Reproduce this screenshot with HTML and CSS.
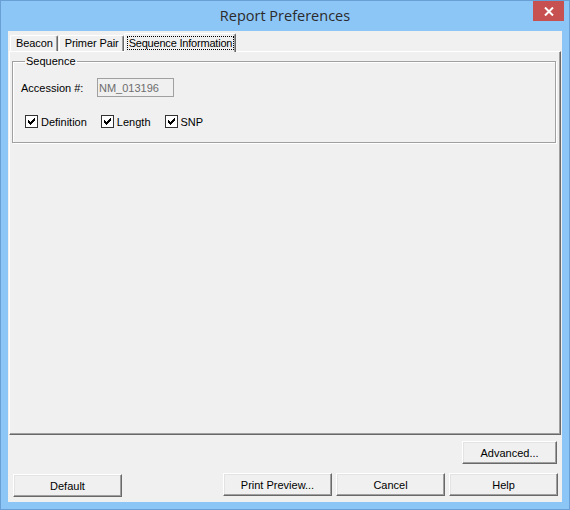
FILE: index.html
```html
<!DOCTYPE html>
<html lang="en">
<head>
    <meta charset="UTF-8" />
    <title>Report Preferences</title>
    <link rel="stylesheet" href="styles.css">
</head>
<body>
<div class="window">
    <div class="titlebar">
        <span></span>
        <span class="title">Report Preferences</span>
        <span class="close">
            <svg width="10" height="9" viewBox="0 0 10 9"><path d="M1 0.5 L9 8.5 M9 0.5 L1 8.5" stroke="#fff" stroke-width="2"/></svg>
        </span>
    </div>

    <div class="client">
        <div class="tabs">
            <div class="tab">Beacon</div>
            <div class="tab">Primer Pair</div>
            <div class="tab active"><span class="focus">Sequence Information</span></div>
        </div>

        <div class="panel">
            <fieldset class="group">
                <legend>Sequence</legend>
                <div class="field">
                    <label for="accession">Accession #:</label>
                    <input type="text" id="accession" value="NM_013196" disabled>
                </div>
                <div class="checks">
                    <label class="check"><span class="box"><svg width="7" height="7" viewBox="0 0 7 7"><path d="M0 2h1v1h1v1h1v-1h1v-1h1v-1h1v-1h1v3h-1v1h-1v1h-1v1h-1v1h-1v-1h-1v-1h-1z" fill="#000"/></svg></span>Definition</label>
                    <label class="check"><span class="box"><svg width="7" height="7" viewBox="0 0 7 7"><path d="M0 2h1v1h1v1h1v-1h1v-1h1v-1h1v-1h1v3h-1v1h-1v1h-1v1h-1v1h-1v-1h-1v-1h-1z" fill="#000"/></svg></span>Length</label>
                    <label class="check"><span class="box"><svg width="7" height="7" viewBox="0 0 7 7"><path d="M0 2h1v1h1v1h1v-1h1v-1h1v-1h1v-1h1v3h-1v1h-1v1h-1v1h-1v1h-1v-1h-1v-1h-1z" fill="#000"/></svg></span>SNP</label>
                </div>
            </fieldset>
        </div>

        <div class="footer">
            <div class="row-adv">
                <button class="btn">Advanced...</button>
            </div>
            <div class="row-main">
                <button class="btn btn-default">Default</button>
                <div class="spacer"></div>
                <button class="btn">Print Preview...</button>
                <button class="btn">Cancel</button>
                <button class="btn">Help</button>
            </div>
        </div>
    </div>
</div>
</body>
</html>
```

FILE: styles.css
```css
body { margin: 0; font-family: "Liberation Sans", Arial, sans-serif; font-size: 11px; color: #000; }
.window { width: 570px; height: 510px; box-sizing: border-box; background: #8cc6f7; border: 1px solid #6a9fd6; display: flex; flex-direction: column; }

.titlebar { height: 30px; display: grid; grid-template-columns: 1fr auto 1fr; align-items: start; }
.title { font-family: "Open Sans", "Noto Sans", sans-serif; font-size: 14.5px; color: #2b2b2b; margin-top: 5px; }
.close { justify-self: end; margin-right: 5px; width: 31px; height: 20px; background: #c75050; display: flex; align-items: center; justify-content: center; }
.close svg { display: block; }

.client { flex: 1; margin: 0 7px 7px 7px; background: #f0f0f0; display: flex; flex-direction: column; }

.tabs { display: flex; align-items: flex-end; height: 20px; padding-left: 2px; position: relative; z-index: 1; }
.tab { height: 16px; line-height: 15px; padding: 0 4px 0 5px; letter-spacing: -0.1px; border-top: 1px solid #fff; border-left: 1px solid #fff; border-right: 1px solid #696969; box-shadow: inset -1px 0 0 #a0a0a0; border-radius: 2px 2px 0 0; box-sizing: border-box; }
.tab + .tab { margin-left: 1px; }
.tab.active { height: 19px; margin: 0 0 -1px 0; padding: 2px 1px 0 2px; background: #f0f0f0; letter-spacing: -0.2px; }
.focus { display: block; border: 1px dotted #000; padding: 0 1px; line-height: 12px; height: 12px; }

.panel { height: 384px; flex: none; box-sizing: border-box; margin: 0 1px; border-top: 1px solid #fff; border-left: 1px solid #fff; border-right: 1px solid #696969; border-bottom: 1px solid #696969; box-shadow: inset -1px -1px 0 #a0a0a0; padding: 3px 0 0 2px; }

.group { width: 544px; height: 88px; box-sizing: border-box; margin: 0; padding: 10px 0 0 8px; border: 1px solid #a0a0a0; box-shadow: 1px 1px 0 #fff, inset 1px 1px 0 #fff; }
.group legend { padding: 0 1px; margin-left: 4px; line-height: 13px; }

.field { display: flex; align-items: center; }
.field label { width: 76px; }
.field input { width: 77px; height: 19px; box-sizing: border-box; margin: 0; padding: 0 1px; border: 1px solid #a0a0a0; background: #f0f0f0; color: #6d6d6d; font: inherit; }

.checks { display: flex; margin: 18px 0 0 4px; }
.check { display: flex; align-items: center; margin-right: 14px; }
.box { width: 13px; height: 13px; box-sizing: border-box; border: 1px solid #333; background: #fff; margin-right: 3px; display: flex; align-items: center; justify-content: center; }
.box svg { display: block; }

.footer { flex: 1; display: flex; flex-direction: column; padding-top: 6px; }
.row-adv { display: flex; justify-content: flex-end; padding-right: 5px; }
.row-main { display: flex; gap: 4px; margin-top: 9px; padding: 0 4px 0 5px; }
.spacer { flex: 1; }

.btn { height: 23px; width: 109px; margin: 0; padding: 0; font: inherit; color: #000; background: #f0f0f0; border: 1px solid; border-color: #fff #696969 #696969 #fff; box-shadow: inset -1px -1px 0 #a0a0a0, inset 1px 1px 0 #e3e3e3; }
.row-adv .btn { width: 95px; }
.btn-default { margin-top: 1px; }
```
